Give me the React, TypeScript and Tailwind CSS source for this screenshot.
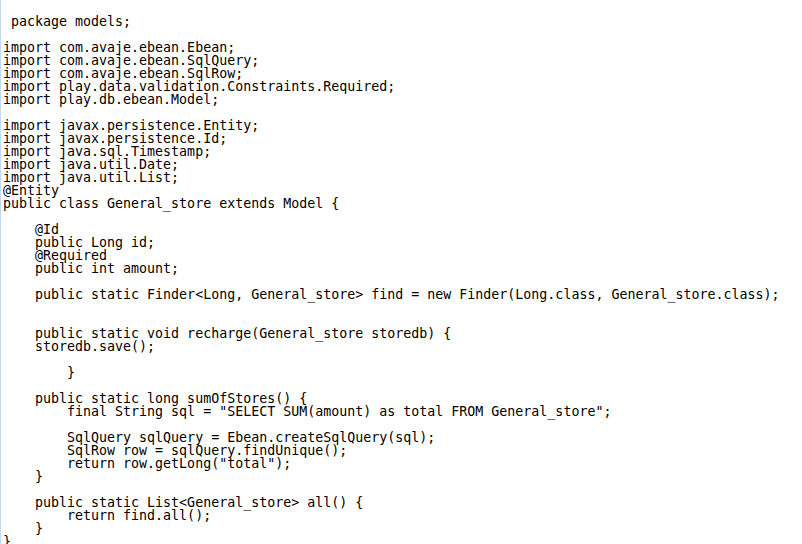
const code = ` package models;

import com.avaje.ebean.Ebean;
import com.avaje.ebean.SqlQuery;
import com.avaje.ebean.SqlRow;
import play.data.validation.Constraints.Required;
import play.db.ebean.Model;

import javax.persistence.Entity;
import javax.persistence.Id;
import java.sql.Timestamp;
import java.util.Date;
import java.util.List;
@Entity
public class General_store extends Model {

    @Id
    public Long id;
    @Required
    public int amount;

    public static Finder<Long, General_store> find = new Finder(Long.class, General_store.class);


    public static void recharge(General_store storedb) {
    storedb.save();

        }

    public static long sumOfStores() {
        final String sql = "SELECT SUM(amount) as total FROM General_store";

        SqlQuery sqlQuery = Ebean.createSqlQuery(sql);
        SqlRow row = sqlQuery.findUnique();
        return row.getLong("total");
    }

    public static List<General_store> all() {
        return find.all();
    }
}`;

export default function App() {
  return (
    <div className="h-[544px] w-[802px] overflow-hidden border-l border-[#c5d9ee] bg-white">
      <pre className="pl-[2px] pt-[15px] font-['DejaVu_Sans_Mono',monospace] text-[13.3px] leading-[13px] text-black whitespace-pre">
        {code}
      </pre>
    </div>
  );
}
